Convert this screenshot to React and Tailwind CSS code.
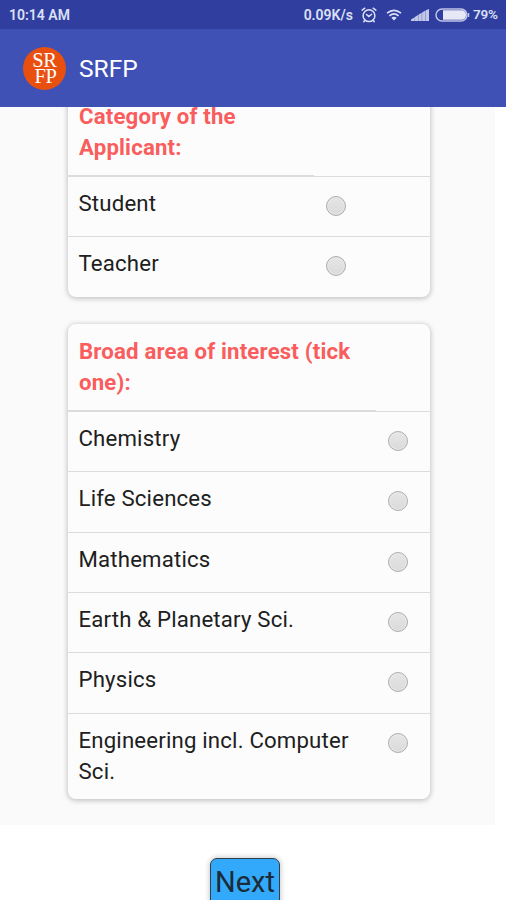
import React from 'react';

function Radio() {
  return (
    <span className="mt-[8px] block h-5 w-5 shrink-0 rounded-full border-[1.5px] border-[#adadad] bg-gradient-to-b from-[#e6e6e6] to-[#dadada] shadow-[inset_0_0_1px_1px_#e9e9e9]" />
  );
}

function Row({ label, gap, last, tall }) {
  return (
    <div
      className={`flex items-start pl-[11px] pt-[11px] ${tall ? 'h-[85.5px]' : 'h-[60.4px]'} ${last ? '' : 'border-b border-[#dcdcdc]'}`}
    >
      <span className={`${gap} shrink-0`}>{label}</span>
      <Radio />
    </div>
  );
}

function Card({ title, children, line }) {
  return (
    <section className="ml-[67.5px] w-[362.5px] overflow-hidden rounded-[8px] bg-[#fcfcfc] shadow-[0_1px_5px_1px_rgba(0,0,0,0.21)]">
      <div className="h-[85.5px] pl-[11.5px] pt-[11.5px] font-bold text-[#f95d5d]">{title}</div>
      <div className="flex h-[2px]">
        <div className={`${line} bg-[#dcdcdc]`} />
        <div className="mt-px h-px flex-1 bg-[#dcdcdc]" />
      </div>
      {children}
    </section>
  );
}

const subjects = ['Chemistry', 'Life Sciences', 'Mathematics', 'Earth & Planetary Sci.', 'Physics'];

export default function App() {
  return (
    <div className="flex h-[900px] w-[506px] flex-col overflow-hidden bg-white font-['Roboto','Liberation_Sans',sans-serif] text-[22.2px] leading-[31px] tracking-[0.18px] text-[#202020]">
      <div className="flex h-[29px] shrink-0 items-center bg-[#303f9f] pl-[9px] pr-[8px] text-[14px] font-semibold leading-none tracking-normal text-[#dce0f6]">
        <span>10:14 AM</span>
        <span className="ml-auto">0.09K/s</span>
        <svg className="ml-[8px] h-4 w-4" viewBox="0 0 16 16" fill="none" stroke="currentColor" strokeWidth="1.5" strokeLinecap="round">
          <circle cx="8" cy="8.7" r="5.9" />
          <path d="M1.2 3.2 3.8 1.2M14.8 3.2 12.2 1.2M5.5 7.5 7.8 9.6 10.6 7.2M3.7 13.5 2.8 14.7M12.3 13.5l.9 1.2" />
        </svg>
        <svg className="ml-[9px] h-3 w-4" viewBox="0 0 16 12" fill="none" stroke="currentColor" strokeWidth="1.6">
          <path d="M1 4.2Q8-1.5 15 4.2M3.4 6.8Q8 3 12.6 6.8" />
          <path d="M8 11.5 5.3 8.8Q8 6.8 10.7 8.8Z" fill="currentColor" stroke="none" />
        </svg>
        <svg className="ml-[9px] h-3 w-[19px]" viewBox="0 0 19 12" fill="#c3c8e9">
          <path d="M0 12V10.5L3.3 8.4V12ZM3.5 12V8.2L7 6V12ZM7.3 12V5.8L10.8 3.8V12ZM11.1 12V3.5L14.5 1.6V12ZM14.8 12V1.3L18 0V12Z" />
        </svg>
        <svg className="ml-[5px] h-[14px] w-[35px]" viewBox="0 0 35 14">
          <rect x="1" y="1" width="31" height="12" rx="6" fill="none" stroke="#bec5e8" strokeWidth="1.5" />
          <path d="M8 2.3H27Q31 2.8 31 7T27 11.7H8Z" fill="#e7e8f5" />
          <path d="M33.5 5v4" stroke="#bec5e8" strokeWidth="1.5" />
        </svg>
        <span className="ml-[3px] w-[25px] text-[13.5px] tracking-[-0.2px]">79%</span>
      </div>
      <header className="flex h-[78px] shrink-0 items-center bg-[#3f51b5] pl-[23px]">
        <div className="flex h-[43px] w-[43px] flex-col items-center rounded-full bg-[#e9500f] pt-[5px] font-['Liberation_Serif',serif] text-[20.5px] leading-[16px] tracking-[-0.3px] text-white">
          <span>SR</span>
          <span className="pl-[2px]">FP</span>
        </div>
        <h1 className="ml-[13px] text-[24.5px] font-normal tracking-normal text-white">SRFP</h1>
      </header>
      <main className="h-[718px] w-[495px] shrink-0 overflow-hidden bg-[#fafafa]">
        <div className="-mt-[18px] flex flex-col gap-[27px]">
          <Card title={<>Category of the<br />Applicant:</>} line="w-[246px]">
            <Row label="Student" gap="w-[247.5px]" />
            <Row label="Teacher" gap="w-[247.5px]" last />
          </Card>
          <Card title={<>Broad area of interest (tick<br />one):</>} line="w-[308px]">
            {subjects.map((s) => (
              <Row key={s} label={s} gap="w-[309.5px]" />
            ))}
            <Row label={<>Engineering incl. Computer<br />Sci.</>} gap="w-[309.5px]" last tall />
          </Card>
        </div>
      </main>
      <footer className="h-[75px] shrink-0 overflow-hidden pl-[210px] pt-[33px]">
        <button className="block h-[56px] w-[70px] rounded-[7px] border-[1.5px] border-[#30404a] bg-[#33a9fb] pt-[4px] pb-[13px] text-center text-[29px] leading-[36px] tracking-normal text-[#1c2b38] shadow-[0_0_5px_1px_rgba(0,0,0,0.2)]">
          Next
        </button>
      </footer>
    </div>
  );
}
